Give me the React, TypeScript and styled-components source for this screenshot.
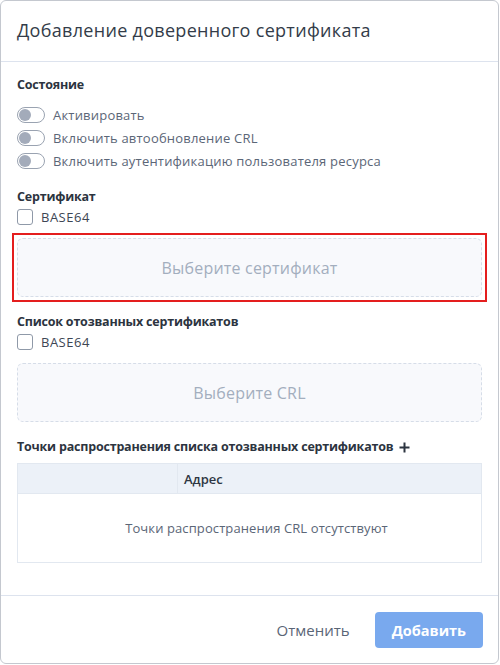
import React from "react";
import styled, { createGlobalStyle } from "styled-components";

const Global = createGlobalStyle`
  html, body { margin: 0; padding: 0; background: #ffffff; }
  body { font-family: "Open Sans", "Noto Sans", Arial, sans-serif; }
  * { box-sizing: border-box; }
`;

const Modal = styled.div`
  width: 499px;
  height: 664px;
  border: 1px solid #c4c8cf;
  border-radius: 6px;
  background: #fff;
  display: flex;
  flex-direction: column;
  overflow: hidden;
`;

const Header = styled.div`
  height: 61px;
  flex: none;
  display: flex;
  align-items: center;
  padding: 0 16px 2px;
  border-bottom: 1px solid #dde3ee;
`;

const Title = styled.h1`
  margin: 0;
  font-size: 18px;
  font-weight: 500;
  color: #333c49;
  letter-spacing: 0.3px;
`;

const Body = styled.div`
  flex: 1;
  padding: 14px 16px 0;
  display: flex;
  flex-direction: column;
`;

const SectionTitle = styled.div<{ $gap?: number }>`
  font-size: 12.5px;
  font-weight: 700;
  letter-spacing: -0.2px;
  color: #2c3440;
  line-height: 18px;
  margin-top: ${(p) => p.$gap ?? 0}px;
  display: flex;
  align-items: center;
  gap: 6px;
`;

const ToggleList = styled.div`
  margin-top: 9px;
  display: flex;
  flex-direction: column;
`;

const ToggleRow = styled.label`
  height: 23px;
  display: flex;
  align-items: center;
  gap: 8px;
  font-size: 13px;
  color: #5b6677;
  letter-spacing: 0.2px;
`;

const Track = styled.span`
  width: 28px;
  height: 16px;
  border-radius: 8px;
  border: 1px solid #9aa3b1;
  background: #fff;
  position: relative;
  flex: none;
`;

const Knob = styled.span`
  position: absolute;
  left: 1px;
  top: 1px;
  width: 12px;
  height: 12px;
  border-radius: 50%;
  background: #a3abba;
`;

const CheckRow = styled.label`
  height: 20px;
  margin-top: 1px;
  display: flex;
  align-items: center;
  gap: 8px;
  font-size: 13px;
  color: #3d4654;
  letter-spacing: 0.5px;
`;

const Box = styled.span`
  width: 16px;
  height: 16px;
  border: 1px solid #8f99a8;
  border-radius: 3px;
  background: #fff;
  flex: none;
`;

const FocusFrame = styled.div`
  margin: 6px -5px 0;
  padding: 3px;
  border: 2px solid #e41e1e;
  display: flex;
  flex-direction: column;
`;

const Drop = styled.div<{ $inFrame?: boolean }>`
  margin-top: ${(p) => (p.$inFrame ? 0 : 11)}px;
  height: 59px;
  border: 1.5px dashed #d6dde8;
  border-radius: 6px;
  background: #f8f9fc;
  display: flex;
  align-items: center;
  justify-content: center;
  font-size: 16px;
  color: #a3aebe;
  letter-spacing: 0.2px;
`;

const Table = styled.div`
  margin-top: 7px;
  border: 1px solid #e2e8f0;
  display: flex;
  flex-direction: column;
`;

const HeadRow = styled.div`
  height: 30px;
  display: grid;
  grid-template-columns: 160px 1fr;
  background: #ecf1f8;
  border-bottom: 1px solid #e2e8f0;
`;

const HeadCell = styled.div<{ $divider?: boolean }>`
  display: flex;
  align-items: center;
  padding: 0 6px;
  font-size: 13px;
  font-weight: 600;
  color: #2e3642;
  border-right: ${(p) => (p.$divider ? "1px solid #e2e8f0" : "none")};
`;

const Empty = styled.div`
  height: 68px;
  display: flex;
  align-items: center;
  justify-content: center;
  padding: 0 0 0 14px;
  font-size: 13px;
  color: #5b6677;
  letter-spacing: 0.1px;
`;

const Footer = styled.div`
  flex: none;
  height: 68px;
  border-top: 1px solid #dde3ee;
  display: flex;
  justify-content: flex-end;
  align-items: flex-start;
  padding: 16px 15px 0;
  gap: 13px;
`;

const Button = styled.button<{ $primary?: boolean }>`
  height: 36px;
  border: none;
  border-radius: 4px;
  font-family: inherit;
  font-size: ${(p) => (p.$primary ? 14.5 : 15)}px;
  font-weight: ${(p) => (p.$primary ? 700 : 500)};
  padding: 0 ${(p) => (p.$primary ? 17 : 12)}px;
  background: ${(p) => (p.$primary ? "#79a9ee" : "transparent")};
  color: ${(p) => (p.$primary ? "#ffffff" : "#5a6576")};
  cursor: pointer;
`;

const Toggle = ({ label }: { label: string }) => (
  <ToggleRow>
    <Track>
      <Knob />
    </Track>
    {label}
  </ToggleRow>
);

const Check = ({ label }: { label: string }) => (
  <CheckRow>
    <Box />
    {label}
  </CheckRow>
);

const PlusIcon = () => (
  <svg width="11" height="11" viewBox="0 0 11 11">
    <path d="M5.5 0.5v10M0.5 5.5h10" stroke="#2c3440" strokeWidth="2" />
  </svg>
);

export default function App() {
  return (
    <>
      <Global />
      <Modal>
        <Header>
          <Title>Добавление доверенного сертификата</Title>
        </Header>
        <Body>
          <SectionTitle>Состояние</SectionTitle>
          <ToggleList>
            <Toggle label="Активировать" />
            <Toggle label="Включить автообновление CRL" />
            <Toggle label="Включить аутентификацию пользователя ресурса" />
          </ToggleList>
          <SectionTitle $gap={16}>Сертификат</SectionTitle>
          <Check label="BASE64" />
          <FocusFrame>
            <Drop $inFrame>Выберите сертификат</Drop>
          </FocusFrame>
          <SectionTitle $gap={11}>Список отозванных сертификатов</SectionTitle>
          <Check label="BASE64" />
          <Drop>Выберите CRL</Drop>
          <SectionTitle $gap={16}>
            Точки распространения списка отозванных сертификатов
            <PlusIcon />
          </SectionTitle>
          <Table>
            <HeadRow>
              <HeadCell $divider />
              <HeadCell>Адрес</HeadCell>
            </HeadRow>
            <Empty>Точки распространения CRL отсутствуют</Empty>
          </Table>
        </Body>
        <Footer>
          <Button>Отменить</Button>
          <Button $primary>Добавить</Button>
        </Footer>
      </Modal>
    </>
  );
}
